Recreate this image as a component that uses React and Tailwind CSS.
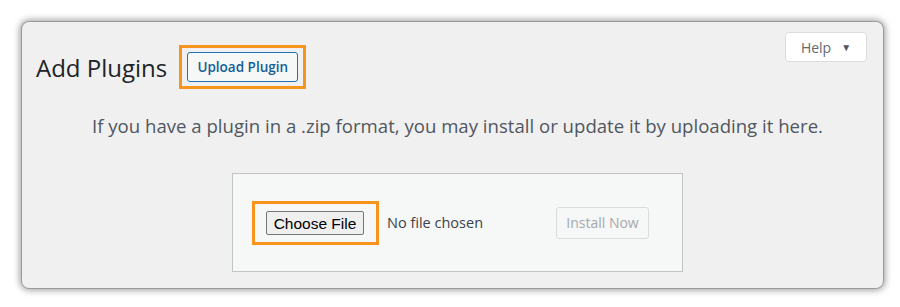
export default function App() {
  return (
    <div className="w-[900px] h-[307px] bg-white pt-[22px] pl-[22px]" style={{ fontFamily: "'Open Sans', 'Noto Sans', sans-serif" }}>
      {/* ===== PANEL ===== */}
      <div className="w-[861px] h-[266px] rounded-[7px] bg-[#f0f0f1] shadow-[0_0_0_1px_rgba(0,0,0,0.18),0_0_7px_2px_rgba(0,0,0,0.4)] overflow-hidden">

        {/* HEADER ROW */}
        <div className="flex justify-between items-start pt-[10px] pr-[16px]">
          <div className="flex items-center pl-[14px] mt-[13px]">
            <h1 className="text-[24px] leading-none text-[#1d2327] mr-[12px] pt-[2px]">Add Plugins</h1>
            <div className="border-[3px] border-[#f7941d] px-[5px] py-[4px]">
              <button className="w-[111px] h-[30px] rounded-[3px] border border-[#2271b1] bg-[#f6f7f7] text-[#135e96] text-[13.5px] font-semibold">
                Upload Plugin
              </button>
            </div>
          </div>
          <button className="flex items-center gap-[10px] w-[82px] h-[30px] justify-center bg-white border border-[#dcdcde] rounded-[4px] text-[#646970] text-[14px]">
            <span>Help</span>
            <span className="text-[10px] text-[#50575e]">▼</span>
          </button>
        </div>

        {/* UPLOAD AREA */}
        <div className="pl-[10px] flex flex-col items-center">
          <p className="mt-[25px] text-[18.6px] leading-[24px] text-[#50575e]">
            If you have a plugin in a .zip format, you may install or update it by uploading it here.
          </p>

          <div className="mt-[35px] w-[451px] h-[99px] border border-[#c3c4c7] bg-[#f6f7f7] flex items-center pl-[19px] pr-[33px]">
            <div className="border-[3px] border-[#f7941d] pl-[11px] pr-[12px] py-[7px]">
              <button className="w-[98px] h-[24px] rounded-[2px] border border-[#767676] bg-[#efefef] text-[15.5px] text-black" style={{ fontFamily: "'Liberation Sans', Arial, sans-serif" }}>
                Choose File
              </button>
            </div>
            <span className="ml-[8px] text-[14.5px] text-[#3c434a]">No file chosen</span>
            <button className="ml-auto w-[93px] h-[32px] rounded-[3px] border border-[#dcdcde] bg-[#f6f7f7] text-[#a7aaad] text-[14px]">
              Install Now
            </button>
          </div>
        </div>
      </div>
    </div>
  );
}
